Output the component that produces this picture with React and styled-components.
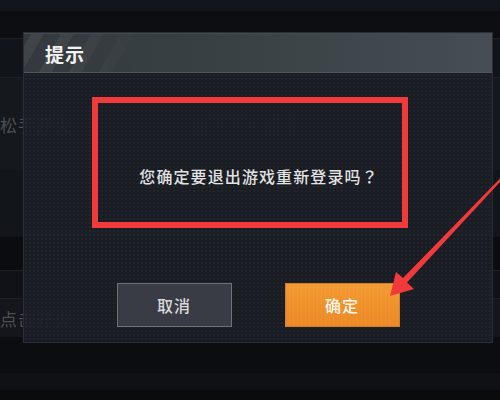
import React from "react";
import styled, { createGlobalStyle } from "styled-components";

const Global = createGlobalStyle`
  html, body { margin: 0; padding: 0; background: #0b0d10; }
  body { font-family: "Noto Sans CJK SC", "Noto Sans", sans-serif; }
  * { box-sizing: border-box; }
`;

const Screen = styled.div`
  position: relative;
  width: 500px;
  height: 400px;
  overflow: hidden;
  background: #0b0d10;
`;

const Backdrop = styled.div`
  display: flex;
  flex-direction: column;
  width: 100%;
  height: 100%;
`;

const BgRow = styled.div`
  flex: 0 0 ${(p) => p.$h}px;
  background: ${(p) => p.$bg};
  border-top: ${(p) => (p.$line ? "1px solid #1d2025" : "none")};
  display: flex;
  align-items: center;
  gap: 120px;
  color: #4a4d52;
  font-size: 17px;
  white-space: nowrap;
`;

const BgText = styled.span`
  color: ${(p) => p.$c || "#4b4e53"};
  letter-spacing: 1px;
`;

const Dialog = styled.section`
  position: absolute;
  left: 23px;
  top: 32px;
  width: 470px;
  height: 311px;
  display: flex;
  flex-direction: column;
  border: 1px solid #2b2f35;
  background-color: rgba(27, 30, 37, 0.94);
  background-image: radial-gradient(rgba(255, 255, 255, 0.03) 0.8px, transparent 1px);
  background-size: 4px 4px;
`;

const Header = styled.header`
  position: relative;
  flex: 0 0 40px;
  display: flex;
  align-items: center;
  padding-left: 21px;
  background: linear-gradient(90deg, #33393d 0%, #3a4145 45%, #464e53 100%);
  border-top: 1px solid #454c51;
  border-bottom: 1px solid #4e565b;
  overflow: hidden;
  &::before {
    content: "";
    position: absolute;
    left: 0;
    top: 0;
    width: 120px;
    height: 100%;
    background: repeating-linear-gradient(
      120deg,
      transparent 0 6px,
      rgba(255, 255, 255, 0.06) 6px 17px,
      transparent 17px 26px
    );
    -webkit-mask-image: linear-gradient(90deg, #000 30%, transparent 100%);
    mask-image: linear-gradient(90deg, #000 30%, transparent 100%);
  }
`;

const Title = styled.h1`
  position: relative;
  margin: 0;
  font-size: 19px;
  font-weight: 700;
  color: #f2f2f2;
  letter-spacing: 1px;
`;

const Body = styled.div`
  flex: 1;
  display: flex;
  flex-direction: column;
  align-items: center;
  padding-top: 93px;
  padding-bottom: 15px;
`;

const Message = styled.p`
  margin: 0;
  height: 20px;
  line-height: 20px;
  font-size: 16px;
  font-weight: 500;
  color: #e2e2e2;
  letter-spacing: 1.1px;
  padding-left: 2px;
`;

const Punct = styled.span`
  font-family: "Noto Sans CJK JP", "Noto Sans CJK SC", sans-serif;
`;

const Actions = styled.div`
  margin-top: auto;
  display: flex;
  gap: 53px;
`;

const Button = styled.button`
  width: 115px;
  height: 44px;
  font-family: inherit;
  font-size: 16px;
  font-weight: 500;
  letter-spacing: 1px;
  cursor: pointer;
  border: 1px solid ${(p) => (p.$primary ? "#d47e27" : "#6d7178")};
  color: ${(p) => (p.$primary ? "#fff8ee" : "#d9d9d9")};
  background: ${(p) =>
    p.$primary
      ? "repeating-linear-gradient(90deg, rgba(255,220,150,0) 0 3px, rgba(255,210,140,0.08) 3px 4px), linear-gradient(180deg, #f39a32 0%, #ee8f2a 60%, #ec8a28 100%)"
      : "#393c45"};
`;

const RedBox = styled.div`
  position: absolute;
  left: 92px;
  top: 97px;
  width: 316px;
  height: 131px;
  border: 6px solid #f03a3c;
  pointer-events: none;
`;

const ArrowLayer = styled.svg`
  position: absolute;
  left: 0;
  top: 0;
  pointer-events: none;
`;

export default function App() {
  return (
    <Screen>
      <Global />
      <Backdrop>
        <BgRow $h={11} $bg="#121519" />
        <BgRow $h={27} $bg="#0c0e12" />
        <BgRow $h={39} $bg="#111419" $line />
        <BgRow $h={93} $bg="#15181d" $line>
          <BgText>松手开火</BgText>
          <BgText $c="#24272d">按下开火模式</BgText>
        </BgRow>
        <BgRow $h={67} $bg="#121519" />
        <BgRow $h={33} $bg="#0b0c0f" />
        <BgRow $h={28} $bg="#101217" $line />
        <BgRow $h={39} $bg="#14161b" $line>
          <BgText>点击开火</BgText>
        </BgRow>
        <BgRow $h={36} $bg="#0c0d10" />
        <BgRow $h={17} $bg="#101114" />
        <BgRow $h={10} $bg="#0a0b0d" />
      </Backdrop>

      <Dialog>
        <Header>
          <Title>提示</Title>
        </Header>
        <Body>
          <Message>
            您确定要退出游戏重新登录吗<Punct>？</Punct>
          </Message>
          <Actions>
            <Button>取消</Button>
            <Button $primary>确定</Button>
          </Actions>
        </Body>
      </Dialog>

      <RedBox />

      <ArrowLayer width="500" height="400" viewBox="0 0 500 400">
        <polygon
          points="390,296 396,272 403,278 500,178.5 501,181 407,282.5 414,289"
          fill="#f03a3c"
        />
      </ArrowLayer>
    </Screen>
  );
}
